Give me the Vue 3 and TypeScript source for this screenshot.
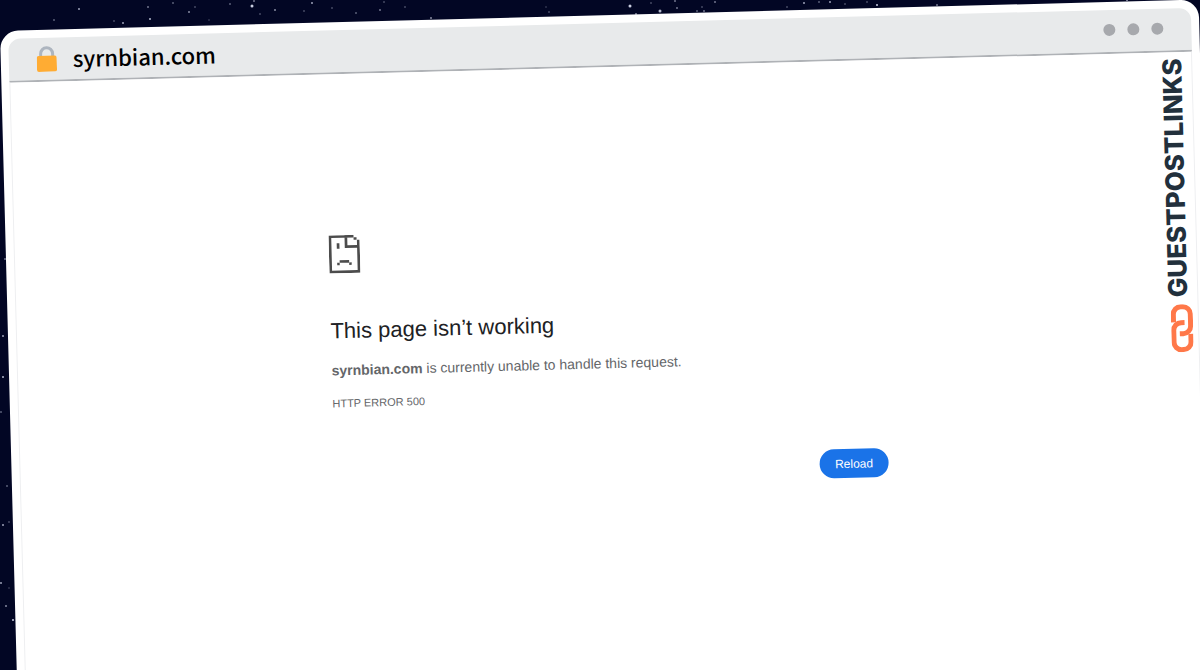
<script setup lang="ts">
interface Star {
  x: number
  y: number
  r: number
  o: number
}

const site = 'syrnbian.com'

const toStar = ([x, y, r, o]: number[]): Star => ({ x, y, r, o })

const stars: Star[] = [
  [79, 9, 1, 0.7], [54, 20, 1, 0.4], [114, 21, 1, 0.3], [123, 23, 1, 0.7], [148, 7, 1, 0.5],
  [150, 19, 1, 0.8], [173, 3, 1, 0.4], [189, 12, 1, 0.6], [195, 7, 1, 0.3], [209, 20, 1, 0.2],
  [230, 4, 1, 0.4], [252, 6, 1.5, 0.9], [254, 1, 1, 0.5], [260, 14, 1, 0.3], [275, 10, 1, 0.6],
  [304, 11, 1, 0.3], [312, 3, 1, 0.7], [332, 8, 1, 0.3], [356, 13, 1, 0.4], [380, 10, 1, 0.5],
  [384, 2, 1, 0.3], [405, 7, 1, 0.3], [431, 18, 1, 0.6], [546, 7, 1, 0.2], [549, 12, 1, 0.3],
  [630, 6, 1.5, 0.9], [636, 14, 1, 0.6], [651, 3, 1, 0.3], [660, 11, 1.5, 0.8], [675, 1, 1, 0.5],
  [677, 8, 1, 0.5], [697, 11, 1, 0.4], [704, 11, 1, 0.5], [702, 7, 1, 0.3], [715, 2, 1, 0.5],
  [787, 7, 1, 0.3], [804, 3, 1, 0.7], [819, 2, 1, 0.4], [830, 2, 1, 0.7], [845, 4, 1, 0.3],
  [867, 2, 1, 0.3], [877, 5, 1, 0.9], [937, 5, 1, 0.5], [1127, 0, 1, 0.7],
  [5, 259, 1, 0.5], [3, 336, 1, 0.7], [3, 377, 1, 0.8], [1, 412, 1, 0.4],
  [7, 486, 1, 0.4], [3, 525, 1, 0.7], [9, 522, 1, 0.3], [1, 583, 1, 0.7], [6, 606, 1, 0.6],
  [9, 588, 1, 0.2], [13, 620, 1, 0.9],
].map(toStar)

function reload(): void {
  window.location.reload()
}
</script>

<template>
  <div class="scene">
    <svg class="sky" aria-hidden="true">
      <circle v-for="(s, i) in stars" :key="i" :cx="s.x" :cy="s.y" :r="s.r" :opacity="s.o" />
    </svg>

    <div class="window">
      <header class="bar">
        <svg class="lock" viewBox="0 0 20 26" aria-hidden="true">
          <path d="M4 12V8a6 6 0 0 1 12 0v4" fill="none" stroke="#adb5bf" stroke-width="3" />
          <rect x="0" y="10" width="20" height="16" rx="2" fill="#ffac33" />
        </svg>
        <span class="address">{{ site }}</span>
        <span class="dots" aria-hidden="true"><i /><i /><i /></span>
      </header>

      <div class="body">
        <main class="error">
          <svg class="sad" viewBox="0 0 31 38" fill="#4c4c4c" aria-hidden="true">
            <path d="M0 0H25V2.700H2.700V35.300H28.300V13H16V0H18.700V10.300H28.300V5H31V38H0Z" />
            <path d="M25 2.500H28V5H25ZM8 8H10.700V13.500H8ZM10.500 25H20V27.600H10.500ZM8 27.500H10.500V30H8ZM20 27.500H22.500V30H20Z" />
          </svg>
          <h1>This page isn’t working</h1>
          <p class="reason"><strong>{{ site }}</strong> is currently unable to handle this request.</p>
          <p class="code">HTTP ERROR 500</p>
          <button type="button" class="reload" @click="reload">Reload</button>
        </main>

        <aside class="brand">
          <span class="brand-name">GUESTPOSTLINKS</span>
          <svg class="chain" viewBox="0 0 22 48" fill="none" stroke="#ff7849" stroke-width="5" aria-hidden="true">
            <path d="M2.500 18V10A7.500 7.500 0 0 1 10 2.500H12A7.500 7.500 0 0 1 19.500 10V22A7.500 7.500 0 0 1 12 29.500H8.500" />
            <path d="M13.500 18.500H10A7.500 7.500 0 0 0 2.500 26V38A7.500 7.500 0 0 0 10 45.500H12A7.500 7.500 0 0 0 19.500 38V30" />
          </svg>
        </aside>
      </div>
    </div>
  </div>
</template>

<style>
body {
  margin: 0;
}
</style>

<style scoped>
.scene {
  position: relative;
  box-sizing: border-box;
  height: 100vh;
  padding-top: 31px;
  overflow: hidden;
  background: #020624;
  font-family: "Liberation Sans", Arial, sans-serif;
}

.sky {
  position: absolute;
  inset: 0;
  width: 100%;
  height: 100%;
  fill: #dfe3f5;
}

.window {
  position: relative;
  box-sizing: border-box;
  display: flex;
  flex-direction: column;
  min-height: 110vh;
  margin-right: 1px;
  padding: 8px;
  border-radius: 18px;
  background: #fff;
  transform: rotate(-1.5deg);
  transform-origin: 0 0;
}

.bar {
  display: flex;
  align-items: center;
  height: 42px;
  padding: 0 28px;
  border-bottom: 2px solid #afb2b6;
  border-radius: 12px 12px 0 0;
  background: #e8eaeb;
}

.lock {
  width: 20px;
  height: 26px;
}

.address {
  margin-left: 16px;
  padding-bottom: 2px;
  color: #000;
  font: 500 22px/32px "Noto Sans CJK SC", sans-serif;
}

.dots {
  display: flex;
  gap: 12px;
  margin-left: auto;
  padding-bottom: 2px;
}

.dots i {
  width: 12px;
  height: 12px;
  border-radius: 50%;
  background: #a7a9ad;
}

.body {
  position: relative;
  display: flex;
  flex: 1;
  justify-content: center;
  border: solid #eeeff1;
  border-width: 0 1px;
}

.error {
  display: flex;
  flex-direction: column;
  width: 554px;
  padding-top: 161px;
  color: #646669;
}

.sad {
  width: 31px;
  height: 38px;
}

h1 {
  margin: 44px 0 0;
  color: #202124;
  font-size: 22px;
  font-weight: 400;
  line-height: 28px;
}

p {
  margin: 0;
}

.reason {
  margin-top: 15px;
  font-size: 14px;
  line-height: 20px;
}

.code {
  margin-top: 14px;
  font-size: 11px;
  line-height: 18px;
}

.reload {
  align-self: flex-end;
  height: 29px;
  margin-top: 50px;
  padding: 0 15px;
  border: 0;
  border-radius: 15px;
  background: #1a73e8;
  color: #fff;
  font: 12px/16px "Liberation Sans", Arial, sans-serif;
}

.brand {
  position: absolute;
  top: 6px;
  right: 5px;
  display: flex;
  flex-direction: column;
  align-items: flex-end;
  gap: 7px;
}

.brand-name {
  color: #22303c;
  font: 800 26px/28px Inter, sans-serif;
  writing-mode: vertical-rl;
  transform: rotate(180deg);
}

.chain {
  width: 22px;
  height: 48px;
}
</style>
